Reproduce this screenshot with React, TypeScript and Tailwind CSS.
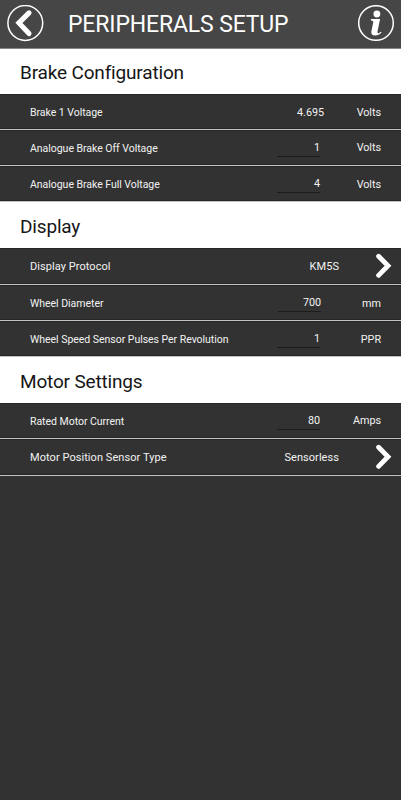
import React from "react";

type RowProps = {
  label: string;
  labelClass: string;
  value: string;
  valueClass?: string;
  unit?: string;
  kind: "text" | "input" | "link";
  className: string;
};

function Chevron() {
  return (
    <svg width="19" height="26" viewBox="0 0 19 26" fill="none" stroke="#fff" strokeWidth="4.8" strokeLinecap="round" strokeLinejoin="miter">
      <path d="M4.6 3.3 14 12.8 4.6 22.4" />
    </svg>
  );
}

function Row({ label, labelClass, value, valueClass = "mr-[37px]", unit, kind, className }: RowProps) {
  return (
    <div className={`flex items-center border-b border-[#c3c3c3] bg-[#323232] pl-[30px] text-[#f2f2f2] shadow-[inset_0_1px_0_#262626,inset_0_-1px_0_#262626] ${kind === "link" ? "text-[11px] tracking-[0.06px]" : "text-[10.5px] tracking-[-0.03px]"} ${className}`}>
      <span className={`flex-1 whitespace-nowrap ${labelClass}`}>{label}</span>
      {kind === "text" && <span className={`mr-[33px] text-[10.8px] ${labelClass}`}>{value}</span>}
      {kind === "input" && (
        <span className={`h-[19px] w-[43px] border-b border-[#1c1c1c] pt-px text-right text-[10.8px] leading-[17px] ${valueClass}`}>{value}</span>
      )}
      {kind === "link" ? (
        <>
          <span className={`mr-[35px] ${labelClass}`}>{value}</span>
          <span className="mr-[8px] w-[19px]"><Chevron /></span>
        </>
      ) : (
        <span className={`mr-5 flex w-[24px] justify-end whitespace-nowrap text-[10.8px] ${labelClass}`}>{unit}</span>
      )}
    </div>
  );
}

function Heading({ children, className }: { children: React.ReactNode; className: string }) {
  return <h2 className={`flex items-center bg-white pl-5 text-[19px] tracking-[-0.17px] text-[#161616] ${className}`}>{children}</h2>;
}

export default function App() {
  return (
    <main className="h-[800px] w-full overflow-hidden bg-[#323232] font-['Roboto',sans-serif]">
      <header className="flex h-[49px] items-center border-b border-[#858585] bg-[#464646] pl-[7px] pr-[6px] text-white">
        <svg width="37" height="37" viewBox="0 0 37 37" fill="none" stroke="#fff" className="mt-[-2px]">
          <circle cx="18.3" cy="18" r="17.4" strokeWidth="1.5" />
          <path d="M22 7.9 11.9 17.9 22 28.6" strokeWidth="5.1" strokeLinecap="round" />
        </svg>
        <h1 className="ml-6 flex-1 whitespace-nowrap pt-px text-[23px] leading-[48px] tracking-[-0.15px]">PERIPHERALS SETUP</h1>
        <svg width="37" height="37" viewBox="0 0 37 37" className="mt-[-2px]">
          <circle cx="18" cy="18" r="17.3" fill="none" stroke="#fff" strokeWidth="1.5" />
          <circle cx="18.9" cy="9" r="3.4" fill="#fff" />
          <path d="M12.9 14h9.2l-2.5 12.1c-.3 1.6-.1 2.1.6 2.1.8 0 1.7-.7 2.7-1.5l.7.9c-1.9 2-4 2.9-6.4 2.9-3.2 0-4.4-1.5-3.8-4.2l1.8-8.9c.2-1.1-.4-1.8-2.3-1.9Z" fill="#fff" />
        </svg>
      </header>
      <Heading className="h-[45px] pt-[3px]">Brake Configuration</Heading>
      <Row className="h-9" label="Brake 1 Voltage" labelClass="pt-[3px]" value="4.695" unit="Volts" kind="text" />
      <Row className="h-9" label="Analogue Brake Off Voltage" labelClass="pt-[2px]" value="1" unit="Volts" kind="input" />
      <Row className="h-9" label="Analogue Brake Full Voltage" labelClass="pt-[3px]" value="4" unit="Volts" kind="input" />
      <Heading className="h-[46px] pt-[4px]">Display</Heading>
      <Row className="h-[37px]" label="Display Protocol" labelClass="pt-[2px]" value="KM5S" kind="link" />
      <Row className="h-9" label="Wheel Diameter" labelClass="pt-[3px]" value="700" valueClass="mr-[36px]" unit="mm" kind="input" />
      <Row className="h-9" label="Wheel Speed Sensor Pulses Per Revolution" labelClass="pt-[3px]" value="1" unit="PPR" kind="input" />
      <Heading className="h-[46px] pt-[4px]">Motor Settings</Heading>
      <Row className="h-9" label="Rated Motor Current" labelClass="pt-[2px]" value="80" unit="Amps" kind="input" />
      <Row className="h-[37px]" label="Motor Position Sensor Type" labelClass="pt-[3px]" value="Sensorless" kind="link" />
    </main>
  );
}
